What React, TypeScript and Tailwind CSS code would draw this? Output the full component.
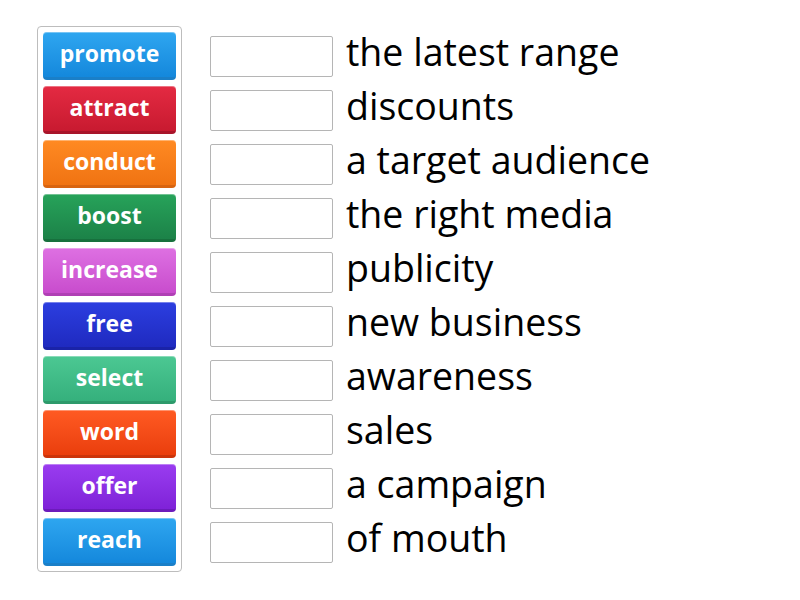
const words = [
  { label: 'promote', cls: 'bg-gradient-to-b from-[#2ea6f0] to-[#1488dc] border-[#1a7fc8]' },
  { label: 'attract', cls: 'bg-gradient-to-b from-[#e42a42] to-[#c81a30] border-[#a8142a]' },
  { label: 'conduct', cls: 'bg-gradient-to-b from-[#ff8a22] to-[#f07312] border-[#d86410]' },
  { label: 'boost', cls: 'bg-gradient-to-b from-[#27a35a] to-[#1c8248] border-[#17703d]' },
  { label: 'increase', cls: 'bg-gradient-to-b from-[#de70e2] to-[#c84ccd] border-[#b03fb5]' },
  { label: 'free', cls: 'bg-gradient-to-b from-[#2c3ee0] to-[#1f2ac0] border-[#1a23a8]' },
  { label: 'select', cls: 'bg-gradient-to-b from-[#4cc893] to-[#35b07c] border-[#2d9a6b]' },
  { label: 'word', cls: 'bg-gradient-to-b from-[#ff5a22] to-[#ea3e0c] border-[#cc340a]' },
  { label: 'offer', cls: 'bg-gradient-to-b from-[#9a3cf0] to-[#7f22d8] border-[#6c1bbb]' },
  { label: 'reach', cls: 'bg-gradient-to-b from-[#2ea6f0] to-[#1488dc] border-[#1a7fc8]' },
];

const phrases = [
  'the latest range',
  'discounts',
  'a target audience',
  'the right media',
  'publicity',
  'new business',
  'awareness',
  'sales',
  'a campaign',
  'of mouth',
];

export default function App() {
  return (
    <div className="w-[800px] h-[600px] bg-white flex pl-[37px] pt-[26px] font-['Open_Sans',sans-serif]">
      {/* word tiles */}
      <div className="self-start flex flex-col gap-[6px] p-[5px] border border-[#bdbdbd] rounded-[4px]">
        {words.map((w) => (
          <div
            key={w.label}
            className={`w-[133px] h-[48px] pb-[2px] rounded-[4px] border-b-[3px] flex items-center justify-center text-white font-bold text-[23px] shadow-[inset_0_1px_0_rgba(255,255,255,0.35)] ${w.cls}`}
          >
            {w.label}
          </div>
        ))}
      </div>

      {/* answer slots */}
      <div className="ml-[28px] pt-[6px] flex flex-col gap-[6px]">
        {phrases.map((p) => (
          <div key={p} className="h-[48px] flex items-center">
            <div className="w-[123px] h-[41px] border border-[#b5b5b5] rounded-[2px] bg-white" />
            <span className="ml-[13px] pb-[9px] text-[37.5px] text-black leading-none">{p}</span>
          </div>
        ))}
      </div>
    </div>
  );
}
